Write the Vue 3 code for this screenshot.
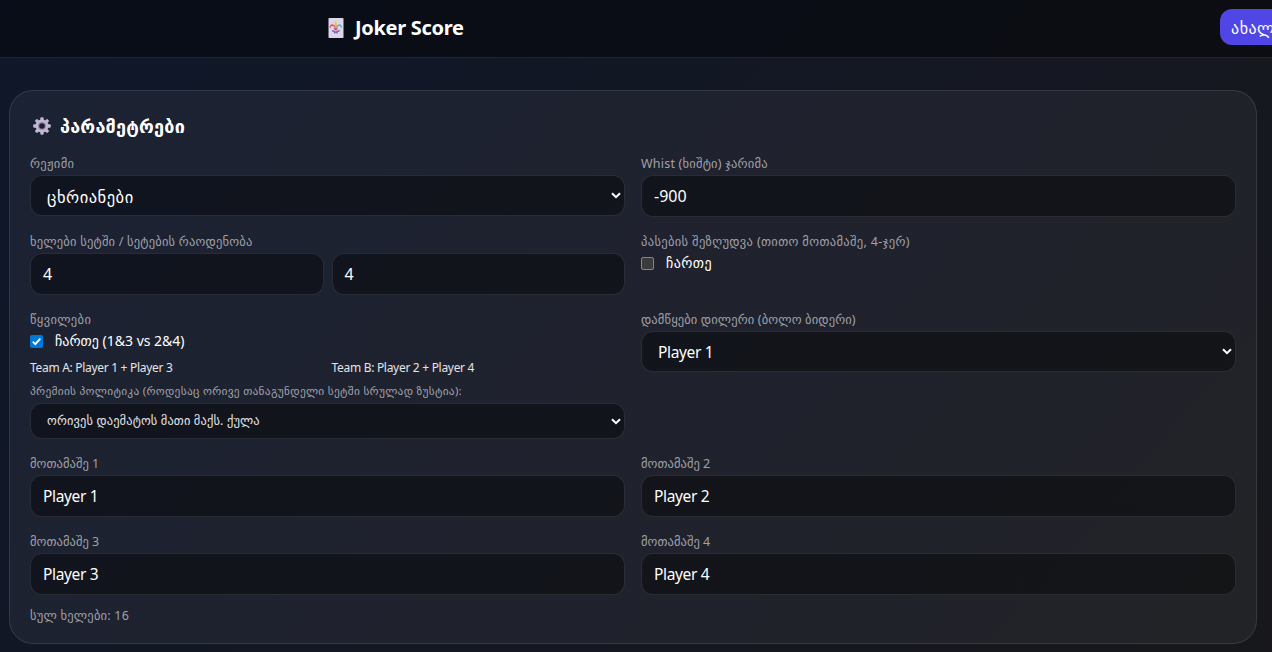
<script setup>
const players = [1, 2, 3, 4]
</script>

<template>
  <div class="page">
    <header class="topbar">
      <h1 class="brand">
        <svg class="joker" viewBox="0 0 16 20" width="16" height="20">
          <rect x="0.5" width="15" height="20" rx="0.8" fill="#dcd7e6" />
          <path d="M6 8 7.6 3.6 9.6 8Z" fill="#f6bd35" />
          <circle cx="7.6" cy="4" r="1" fill="#f9c83a" />
          <path d="M6.6 8.8C5.8 6.8 3.8 6.4 2.6 8.2" fill="none" stroke="#e8436e" stroke-width="1.4" />
          <path d="M8.9 8.8C9.8 6.8 11.8 6.4 13 8.2" fill="none" stroke="#38b4e5" stroke-width="1.4" />
          <circle cx="2.3" cy="8.9" r=".8" fill="#e8436e" />
          <circle cx="13.3" cy="8.9" r=".8" fill="#38b4e5" />
          <circle cx="7.8" cy="10.6" r="2.1" fill="#e57b83" />
          <path d="M3.8 12 6 12.5 7.8 13.4 9.7 12.5 11.9 12 11.4 13.8 10 14 9.4 15.8 7.8 15 6.2 15.8 5.7 14 4.3 13.8Z" fill="#8264b5" />
          <circle cx="7.8" cy="11.3" r=".8" fill="#c43654" />
        </svg>
        <span>Joker Score</span>
      </h1>
      <button class="new-game">ახალი თამაში</button>
    </header>

    <main class="card">
      <h2 class="heading">
        <svg class="gear" viewBox="0 0 18 18" width="18" height="18">
          <g fill="#c3b8d3">
            <rect v-for="a in [0, 45, 90, 135]" :key="a" x="7.3" y="0.2" width="3.4" height="17.6" rx="1.2" :transform="`rotate(${a} 9 9)`" />
            <circle cx="9" cy="9" r="6.5" />
          </g>
          <circle cx="9" cy="9" r="4.1" fill="#9b8caf" />
          <circle cx="9" cy="9" r="2.8" fill="#1d2233" />
        </svg>
        <span>პარამეტრები</span>
      </h2>

      <div class="grid">
        <section>
          <div class="label wide">რეჟიმი</div>
          <div class="control select">
            <span class="geo">ცხრიანები</span>
            <svg class="chevron" viewBox="0 0 10 7" width="10" height="7"><path d="M1 1.2 5 5.2 9 1.2" /></svg>
          </div>
        </section>
        <section>
          <div class="label">Whist (ხიშტი) ჯარიმა</div>
          <div class="control number">-900</div>
        </section>

        <section>
          <div class="label">ხელები სეტში / სეტების რაოდენობა</div>
          <div class="pair">
            <div class="control number">4</div>
            <div class="control number">4</div>
          </div>
        </section>
        <section>
          <div class="label wide">პასების შეზღუდვა (თითო მოთამაშე, 4-ჯერ)</div>
          <div class="check">
            <span class="box"></span>
            <span class="check-geo">ჩართე</span>
          </div>
        </section>

        <section>
          <div class="label wide">წყვილები</div>
          <div class="check">
            <span class="box checked">
              <svg viewBox="0 0 13 13" width="13" height="13"><path d="M2.8 6.7 5.3 9.2 10.3 3.6" fill="none" stroke="#fff" stroke-width="1.9" /></svg>
            </span>
            <span>ჩართე (1&amp;3 vs 2&amp;4)</span>
          </div>
          <div class="pair teams">
            <span>Team A: Player 1 + Player 3</span>
            <span>Team B: Player 2 + Player 4</span>
          </div>
          <div class="policy">პრემიის პოლიტიკა (როდესაც ორივე თანაგუნდელი სეტში სრულად ზუსტია):</div>
          <div class="control select small">
            <span>ორივეს დაემატოს მათი მაქს. ქულა</span>
            <svg class="chevron" viewBox="0 0 10 7" width="10" height="7"><path d="M1 1.2 5 5.2 9 1.2" /></svg>
          </div>
        </section>
        <section>
          <div class="label dealer">დამწყები დილერი (ბოლო ბიდერი)</div>
          <div class="control select">
            <span class="chosen">Player 1</span>
            <svg class="chevron" viewBox="0 0 10 7" width="10" height="7"><path d="M1 1.2 5 5.2 9 1.2" /></svg>
          </div>
        </section>

        <section v-for="n in players" :key="n">
          <div class="label name">მოთამაშე {{ n }}</div>
          <div class="control">Player {{ n }}</div>
        </section>
      </div>

      <div class="total">სულ ხელები: 16</div>
    </main>
  </div>
</template>

<style>
body {
  overflow: hidden;
  background: #0f172a;
}
</style>

<style scoped>
* {
  box-sizing: border-box;
}
.page {
  height: 652px;
  overflow: hidden;
  background: linear-gradient(to bottom right, #0f172a, #18181b 75%) 0 0 / 100% 1500px no-repeat;
  color: #fff;
  font-family: "Noto Sans", "DejaVu Sans", sans-serif;
  white-space: nowrap;
}
.topbar {
  display: flex;
  align-items: center;
  justify-content: space-between;
  height: 58px;
  padding: 0 0 3px 328px;
  background: rgba(0, 0, 0, 0.4);
  border-bottom: 1px solid rgba(255, 255, 255, 0.1);
}
.brand {
  display: flex;
  align-items: center;
  gap: 11px;
  margin: 2px 0 0;
  font-size: 20px;
  line-height: 28px;
  font-weight: 700;
  letter-spacing: -0.3px;
}
.new-game {
  flex: none;
  width: 118px;
  height: 36px;
  margin-right: -66px;
  padding: 1px 11px 0;
  border: 0;
  border-radius: 12px;
  background: #4f46e5;
  color: #fff;
  font-family: inherit;
  font-size: 16px;
  letter-spacing: 0.5px;
  text-align: left;
}
.card {
  width: 1248px;
  height: 554px;
  margin: 32px 0 0 9px;
  padding: 20px;
  border: 1px solid rgba(255, 255, 255, 0.1);
  border-radius: 24px;
  background: rgba(255, 255, 255, 0.05);
}
.heading {
  display: flex;
  align-items: center;
  gap: 9px;
  height: 28px;
  margin: 0 0 16px;
  padding: 1px 0 0 3px;
  font-size: 18px;
  font-weight: 600;
  letter-spacing: 0.22px;
}
.grid {
  display: grid;
  grid-template-columns: 595px 595px;
  gap: 16px;
}
.label {
  height: 16px;
  margin-bottom: 4px;
  color: #a1a1aa;
  font-size: 12.5px;
  line-height: 18px;
  letter-spacing: 0.21px;
}
.label.wide {
  letter-spacing: 0.35px;
}
.label.dealer {
  letter-spacing: 0.14px;
}
.label.name {
  letter-spacing: 0.05px;
}
.control {
  height: 42px;
  padding: 0 12px;
  border: 1px solid rgba(255, 255, 255, 0.1);
  border-radius: 12px;
  background: rgba(0, 0, 0, 0.4);
  font-size: 15.5px;
  line-height: 41px;
  letter-spacing: -0.35px;
}
.control.number {
  font-size: 16px;
  letter-spacing: 0;
}
.select {
  display: flex;
  align-items: center;
  justify-content: space-between;
  height: 41px;
  padding: 0 3px 0 16px;
}
.chosen {
  padding-top: 1px;
}
.geo {
  padding-top: 2px;
  font-size: 16.5px;
  letter-spacing: 0.5px;
}
.select.small {
  height: 36px;
  color: #e4e4e7;
  font-size: 12.4px;
  line-height: 36px;
  letter-spacing: 0.15px;
}
.chevron {
  flex: none;
}
.chevron path {
  fill: none;
  stroke: #fff;
  stroke-width: 2;
}
.pair {
  display: grid;
  grid-template-columns: 1fr 1fr;
  gap: 8px;
}
.check {
  display: flex;
  align-items: center;
  gap: 12px;
  height: 20px;
  font-size: 14px;
  line-height: 20px;
}
.check-geo {
  letter-spacing: 0.4px;
}
.box {
  width: 13px;
  height: 13px;
  border: 1px solid #858585;
  border-radius: 2px;
  background: #3b3b3b;
}
.box.checked {
  border: 0;
  background: #0078d7;
}
.box svg {
  display: block;
}
.teams {
  height: 16px;
  margin-top: 8px;
  color: #e4e4e7;
  font-size: 12px;
  line-height: 18px;
  letter-spacing: -0.3px;
}
.policy {
  height: 16px;
  margin: 8px 0 4px;
  color: #a1a1aa;
  font-size: 11.4px;
  line-height: 16px;
  letter-spacing: 0.28px;
}
.total {
  height: 16px;
  margin-top: 12px;
  color: #a1a1aa;
  font-size: 12.5px;
  line-height: 18px;
  letter-spacing: 0.22px;
}
</style>
